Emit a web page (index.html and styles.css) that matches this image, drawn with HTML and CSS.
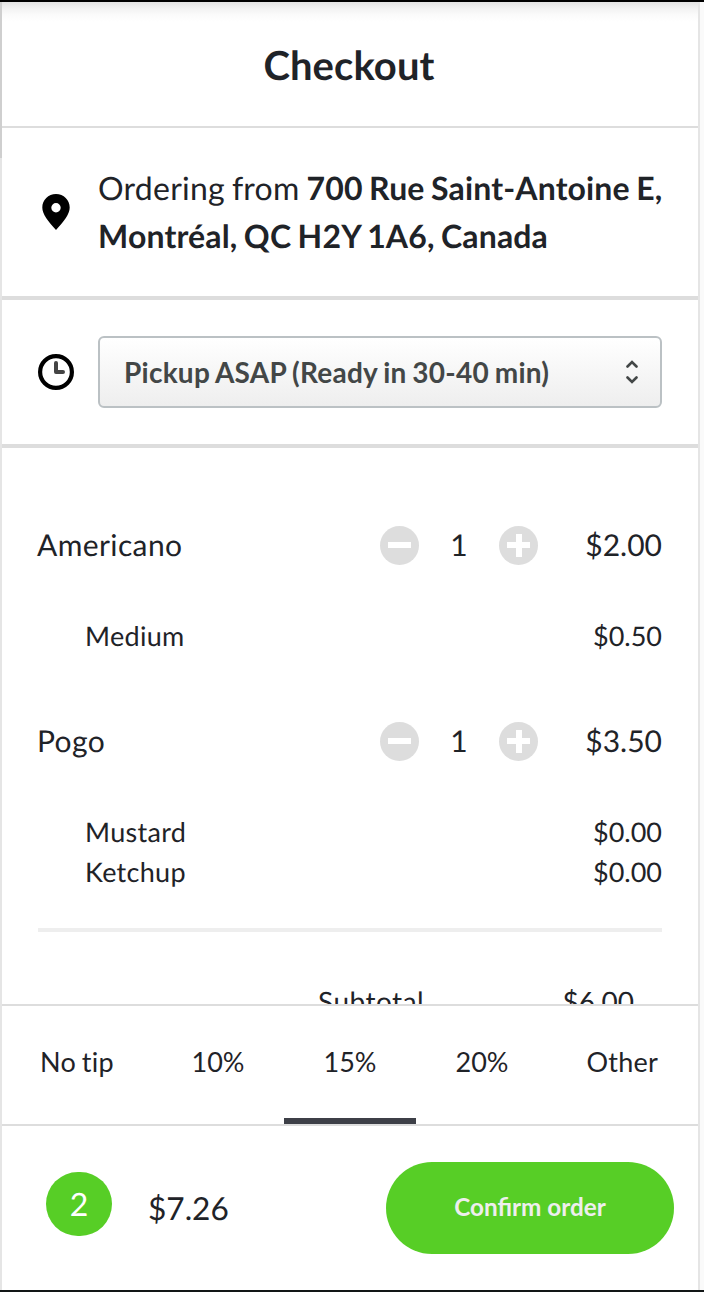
FILE: index.html
```html
<!DOCTYPE html>
<html lang="en">
<head>
    <meta charset="UTF-8">
    <meta name="viewport" content="width=device-width, initial-scale=1.0">
    <title>Checkout</title>
    <link rel="stylesheet" href="styles.css">
</head>
<body>

    <div class="checkout">
        <header class="header">
            <h1>Checkout</h1>
        </header>

        <section class="row address">
            <svg class="icon" width="36" height="36" viewBox="0 0 36 36">
                <path fill-rule="evenodd" d="M18 0C10.300 0 4.300 6 4.300 13.500C4.300 20 10 27.500 18 36C26 27.500 31.700 20 31.700 13.500C31.700 6 25.700 0 18 0ZM18 9A4.700 4.700 0 1 1 18 18.400A4.700 4.700 0 1 1 18 9Z"/>
            </svg>
            <p>Ordering from <strong>700 Rue Saint-Antoine E, Montréal, QC H2Y 1A6, Canada</strong></p>
        </section>

        <section class="row time">
            <svg class="icon" width="36" height="36" viewBox="0 0 36 36" fill="none">
                <circle cx="18" cy="18" r="15.900" stroke="#000" stroke-width="4.200"/>
                <path d="M18 9V18H25" stroke="#444" stroke-width="4" stroke-linecap="round" stroke-linejoin="round"/>
            </svg>
            <button class="select">
                <span>Pickup ASAP (Ready in 30-40 min)</span>
                <svg width="12" height="24" viewBox="0 0 12 24" fill="none" stroke="#434747" stroke-width="2.600" stroke-linecap="round">
                    <path d="M1.500 6.500L6 2L10.500 6.500M1.500 17.500L6 22L10.500 17.500"/>
                </svg>
            </button>
        </section>

        <main class="order">
            <div class="item">
                <span class="name">Americano</span>
                <button class="qty-btn minus"></button>
                <span class="qty">1</span>
                <button class="qty-btn plus"></button>
                <span class="price">$2.00</span>
            </div>
            <div class="options">
                <div class="option"><span>Medium</span><span class="amount">$0.50</span></div>
            </div>

            <div class="item">
                <span class="name">Pogo</span>
                <button class="qty-btn minus"></button>
                <span class="qty">1</span>
                <button class="qty-btn plus"></button>
                <span class="price">$3.50</span>
            </div>
            <div class="options">
                <div class="option"><span>Mustard</span><span class="amount">$0.00</span></div>
                <div class="option"><span>Ketchup</span><span class="amount">$0.00</span></div>
            </div>

            <div class="totals">
                <span class="label">Subtotal</span>
                <span>$6.00</span>
            </div>
        </main>

        <nav class="tips">
            <button class="tip first">No tip</button>
            <button class="tip">10%</button>
            <button class="tip active">15%</button>
            <button class="tip">20%</button>
            <button class="tip last">Other</button>
        </nav>

        <footer class="footer">
            <span class="count">2</span>
            <span class="total">$7.26</span>
            <button class="confirm">Confirm order</button>
        </footer>
    </div>

</body>
</html>
```
FILE: styles.css
```css
* {
    box-sizing: border-box;
}
body {
    margin: 0;
    height: 1292px;
    overflow: hidden;
    background: #fafafa;
    border-top: 2px solid #000;
    border-bottom: 2px solid #121616;
    color: #1f2328;
    font-family: Lato, sans-serif;
    text-rendering: geometricPrecision;
}
button {
    border: none;
    padding: 0;
    background: none;
    color: inherit;
    font-family: inherit;
}
.checkout {
    display: flex;
    flex-direction: column;
    width: 700px;
    height: 1288px;
    padding: 0 2px;
    /* side edges of the panel, the left one is darker at the top */
    background:
        linear-gradient(#cfcfcf, #cfcfcf) 0 0 / 2px 156px no-repeat,
        linear-gradient(#e5e5e5, #e5e5e5) 0 0 / 2px 100% no-repeat,
        linear-gradient(#e5e5e5, #e5e5e5) 100% 0 / 2px 100% no-repeat,
        #fff;
}
.header {
    height: 126px;
    display: flex;
    align-items: center;
    justify-content: center;
    border-bottom: 2px solid #ddd;
    background: linear-gradient(#e3e3e3, #f3f3f3 7px, #fbfbfb 13px, #fff 20px);
}
.header h1 {
    margin: 0 0 0 -2px;
    padding-top: 2px;
    font-size: 40px;
    line-height: 48px;
    letter-spacing: 0.1px;
}

/* Address and pickup time */
.row {
    display: flex;
    align-items: center;
    gap: 24px;
    padding: 0 36px;
    border-bottom: 4px solid #ddd;
}
.icon {
    flex: none;
}
.address {
    height: 172px;
}
.address p {
    margin: 0 -8px 0 0;
    font-size: 32px;
    line-height: 48px;
    letter-spacing: 0.25px;
    word-spacing: -1.5px;
}
.address strong {
    letter-spacing: 0.15px;
}
.time {
    height: 148px;
}
.select {
    flex: 1;
    display: flex;
    align-items: center;
    justify-content: space-between;
    height: 72px;
    padding: 0 22px 0 24px;
    border: 2px solid #bbc1c4;
    border-radius: 6px;
    background: linear-gradient(#fff, #eee);
    color: #434747;
    font-size: 28px;
    font-weight: 700;
    letter-spacing: 0.25px;
    word-spacing: -1.3px;
}
.select span {
    padding-bottom: 1px;
}

/* Order lines */
.order {
    height: 556px;
    overflow: hidden;
    padding: 77px 36px 0;
}
.item {
    display: flex;
    align-items: center;
    height: 40px;
    margin-bottom: 51px;
    font-size: 30px;
}
.item span {
    padding-bottom: 0;
}
.name {
    flex: 1;
    margin-left: -1px;
    letter-spacing: 0.4px;
}
.qty {
    width: 80px;
    text-align: center;
}
.qty-btn {
    width: 39px;
    height: 39px;
    border-radius: 50%;
}
.minus {
    background:
        linear-gradient(#fff, #fff) center / 23px 6px no-repeat,
        #ddd;
}
.plus {
    background:
        linear-gradient(#fff, #fff) center / 23px 6px no-repeat,
        linear-gradient(#fff, #fff) center / 6px 23px no-repeat,
        #ddd;
}
.price {
    width: 124px;
    text-align: right;
}
.options {
    margin-bottom: 65px;
    padding-left: 47px;
    font-size: 27px;
    line-height: 40px;
    letter-spacing: 0.3px;
}
.option {
    display: flex;
    justify-content: space-between;
}
.amount {
    letter-spacing: 0;
}
.totals {
    display: flex;
    justify-content: space-between;
    margin-top: -29px;
    padding: 49px 28px 0 280px;
    border-top: 4px solid #eee;
    font-size: 28px;
    line-height: 40px;
}
.label {
    letter-spacing: 0.5px;
}

/* Tip selector */
.tips {
    display: flex;
    height: 122px;
    padding: 0 18px;
    border-top: 2px solid #ddd;
    border-bottom: 2px solid #ddd;
}
.tip {
    flex: 0 0 132px;
    padding-bottom: 2px;
    border-bottom: 6px solid transparent;
    font-size: 27px;
    font-variant-ligatures: none;
}
.tip.first {
    padding-left: 20px;
    text-align: left;
    letter-spacing: 0.3px;
    word-spacing: -1.5px;
}
.tip.last {
    padding-right: 22px;
    text-align: right;
    letter-spacing: 0.2px;
}
.tip.active {
    border-bottom-color: #3d3f47;
}

.footer {
    flex: 1;
    display: flex;
    align-items: center;
    padding: 0 24px 0 44px;
}
.count {
    width: 66px;
    height: 64px;
    margin: -8px 36px 0 0;
    border-radius: 33px;
    background: #57ce26;
    color: #fff;
    font-size: 32px;
    line-height: 64px;
    text-align: center;
}
.total {
    flex: 1;
    padding-bottom: 1px;
    font-size: 31.6px;
}
.confirm {
    width: 288px;
    height: 92px;
    padding-bottom: 3px;
    border-radius: 46px;
    background: #57ce26;
    color: #eee;
    font-size: 24.3px;
    font-weight: 700;
}
```
